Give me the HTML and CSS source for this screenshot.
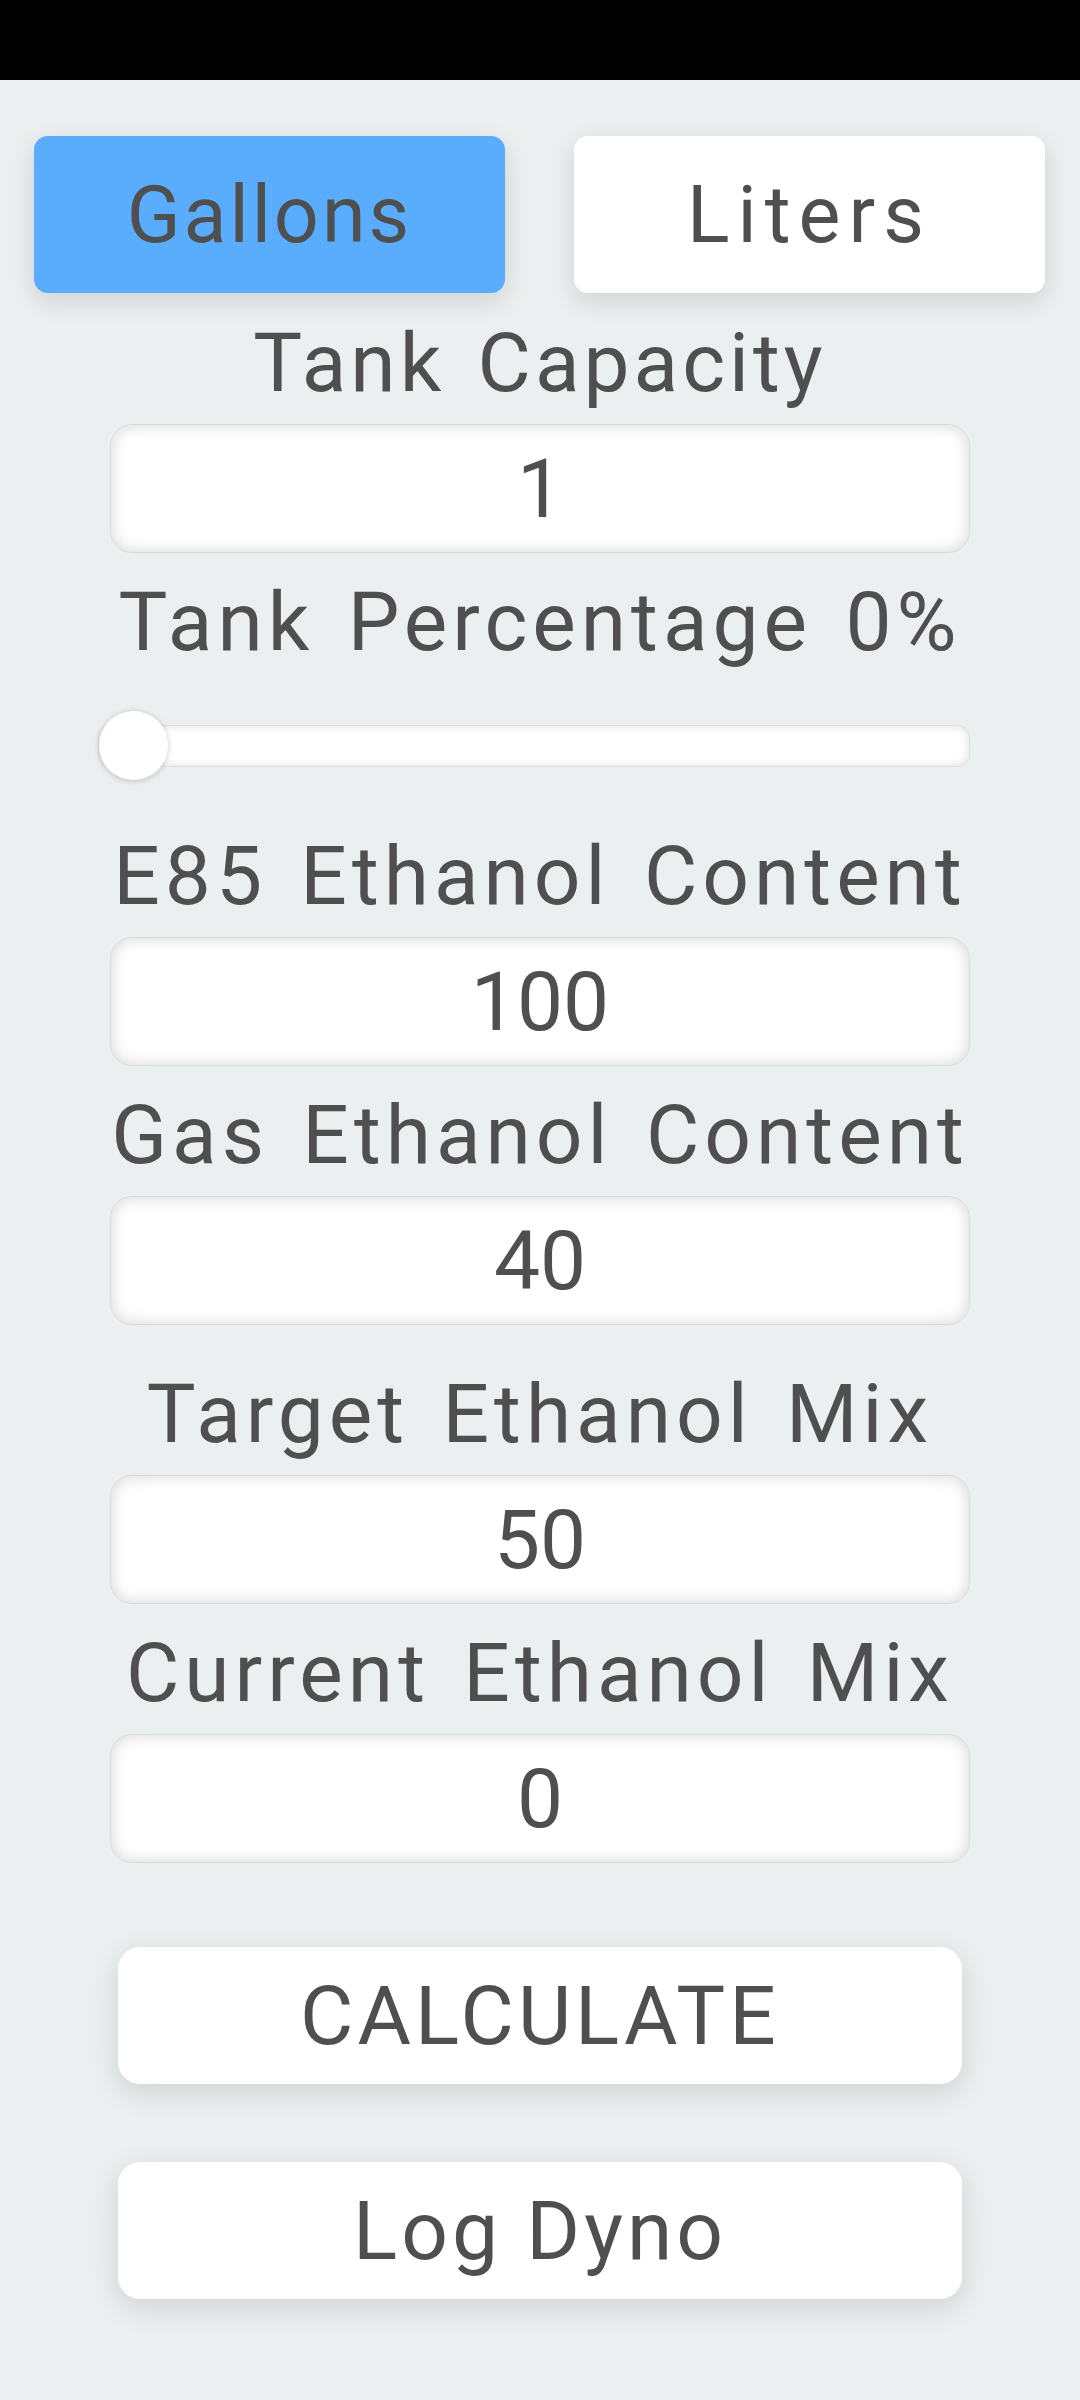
FILE: index.html
```html
<!DOCTYPE html>
<html lang="en">
  <head>
    <meta charset="UTF-8" />
    <meta name="viewport" content="width=device-width, initial-scale=1" />
    <title>Ethanol Mix Calculator</title>
    <link rel="stylesheet" href="styles.css">
  </head>
  <body>
    <div class="status-bar"></div>

    <div class="units">
      <button type="button" class="unit active" data-unit="gal">Gallons</button>
      <button type="button" class="unit" data-unit="l">Liters</button>
    </div>

    <form id="mixForm" class="mix-form">
      <label for="capacity">Tank Capacity</label>
      <input type="text" id="capacity" value="1" />

      <label for="percent">Tank Percentage <span id="percentValue">0</span>%</label>
      <input type="range" id="percent" min="0" max="100" value="0" />

      <label for="e85">E85 Ethanol Content</label>
      <input type="text" id="e85" value="100" />

      <label for="gas">Gas Ethanol Content</label>
      <input type="text" id="gas" value="40" />

      <label for="target" class="spaced">Target Ethanol Mix</label>
      <input type="text" id="target" value="50" />

      <label for="current">Current Ethanol Mix</label>
      <input type="text" id="current" value="0" readonly />

      <button type="submit" class="action calc">CALCULATE</button>
      <button type="button" class="action">Log Dyno</button>
    </form>

    <script>
      const units = document.querySelectorAll(".unit");
      const percent = document.getElementById("percent");
      const percentValue = document.getElementById("percentValue");

      // switch gallons / liters
      units.forEach((btn) => {
        btn.addEventListener("click", () => {
          units.forEach((b) => b.classList.remove("active"));
          btn.classList.add("active");
        });
      });

      percent.addEventListener("input", () => {
        percentValue.textContent = percent.value;
      });

      document.getElementById("mixForm").addEventListener("submit", (e) => {
        e.preventDefault();
      });
    </script>
  </body>
</html>
```

FILE: styles.css
```css
body {
  margin: 0;
  background: #ebeff0;
  font-family: Roboto, "Noto Sans", sans-serif;
  color: #4f4f4f;
}

.status-bar {
  height: 80px;
  background: #000;
}

.units {
  display: flex;
  gap: 69px;
  padding: 56px 35px 0 34px;
}

.unit {
  flex: 1;
  height: 157px;
  border: none;
  border-radius: 14px;
  background: #fff;
  color: #4f4f4f;
  font-family: inherit;
  font-size: 79px;
  letter-spacing: 3px;
  box-shadow: 0 8px 26px rgba(0, 0, 0, 0.12);
}

.unit.active {
  background: #5aacfd;
}

.unit + .unit {
  letter-spacing: 8px;
}

.mix-form {
  display: flex;
  flex-direction: column;
  padding: 0 110px 80px;
}

label {
  display: block;
  margin-top: 28px;
  margin-bottom: 20px;
  text-align: center;
  font-size: 82px;
  line-height: 82px;
  letter-spacing: 5px;
  word-spacing: 8px;
  white-space: nowrap;
}

label:first-child {
  margin-top: 29px;
  letter-spacing: 4px;
}

label.spaced {
  margin-top: 48px;
}

input[type="text"] {
  height: 129px;
  padding: 0;
  border: 1px solid #d9d9d9;
  border-radius: 22px;
  background: #fff;
  box-sizing: border-box;
  box-shadow: inset 0 0 16px rgba(0, 0, 0, 0.17);
  text-align: center;
  font-family: inherit;
  font-size: 82px;
  color: #4f4f4f;
  outline: none;
}

input[type="range"] {
  -webkit-appearance: none;
  appearance: none;
  width: auto;
  height: 69px;
  margin: 28px 0 27px -12px;
  background: transparent;
}

input[type="range"]::-webkit-slider-runnable-track {
  height: 42px;
  border: 1px solid #dedede;
  border-radius: 12px;
  background: #fff;
  box-shadow: inset 0 0 10px rgba(0, 0, 0, 0.14);
}

input[type="range"]::-webkit-slider-thumb {
  -webkit-appearance: none;
  width: 69px;
  height: 69px;
  margin-top: -15px;
  border-radius: 50%;
  background: #fff;
  box-shadow: 0 1px 6px rgba(0, 0, 0, 0.2);
}

.action {
  height: 137px;
  margin: 84px 8px 0;
  border: none;
  border-radius: 22px;
  background: #fff;
  color: #4f4f4f;
  font-family: inherit;
  font-size: 82px;
  letter-spacing: 4px;
  box-shadow: 0 8px 30px rgba(0, 0, 0, 0.12);
}

.action + .action {
  margin-top: 78px;
}
```
